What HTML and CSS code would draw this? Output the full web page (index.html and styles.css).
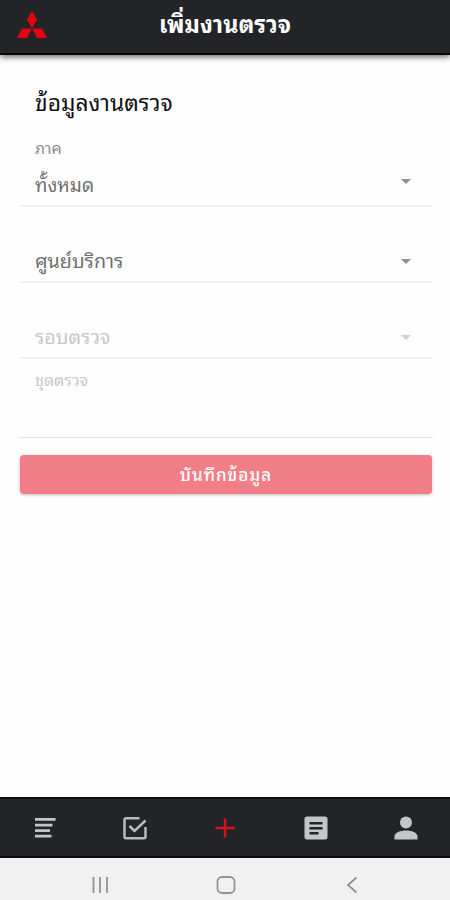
FILE: index.html
```html
<!DOCTYPE html>
<html lang="th">
<head>
    <meta charset="UTF-8">
    <meta name="viewport" content="width=device-width, initial-scale=1.0">
    <title>เพิ่มงานตรวจ</title>
    <link rel="stylesheet" href="styles.css">
</head>
<body>
    <div class="app">
        <header class="header">
            <svg class="logo" viewBox="0 0 30 27">
                <path d="M15 0l5 8.500-5 9-5-9zM15 17.500l-5 9.500H0l5-9.500zM15 17.500l5 9.500h10l-5-9.500z"/>
            </svg>
            <h1>เพิ่มงานตรวจ</h1>
        </header>

        <main class="content">
            <h2>ข้อมูลงานตรวจ</h2>
            <div class="field region">
                <label>ภาค</label>
                <div class="select"><span>ทั้งหมด</span><i class="arrow"></i></div>
            </div>
            <div class="field">
                <div class="select"><span>ศูนย์บริการ</span><i class="arrow"></i></div>
            </div>
            <div class="field disabled">
                <div class="select"><span>รอบตรวจ</span><i class="arrow"></i></div>
            </div>
            <div class="field disabled set">
                <label>ชุดตรวจ</label>
            </div>
            <button class="save" disabled>บันทึกข้อมูล</button>
        </main>

        <!-- Tab bar -->
        <nav class="tabs">
            <a class="tab">
                <svg viewBox="0 0 24 24"><path d="M2 2h20.500v2.800H2zM2 7.700h17.500v2.800H2zM2 13.200h15v2.800H2zM2 18.700h16.500v2.800H2z"/></svg>
            </a>
            <a class="tab">
                <svg class="line" viewBox="0 0 24 24"><path d="M16.500 2.200H3a1.500 1.500 0 0 0-1.500 1.500v17A1.500 1.500 0 0 0 3 22.200h18a1.500 1.500 0 0 0 1.500-1.500V11M6.500 10l5 5L22.500 4.500"/></svg>
            </a>
            <a class="tab active">
                <svg class="line" viewBox="0 0 24 24"><path d="M12 2.500v19M2.500 12h19"/></svg>
            </a>
            <a class="tab">
                <svg viewBox="0 0 24 24"><path fill-rule="evenodd" d="M3 .5h18a2.500 2.500 0 0 1 2.500 2.500v18a2.500 2.500 0 0 1-2.500 2.500H3A2.500 2.500 0 0 1 .5 21V3A2.500 2.500 0 0 1 3 .5zM5.500 6v2.400h13V6zM5.500 11v2.400h13V11zM5.500 16v2.400h9V16z"/></svg>
            </a>
            <a class="tab">
                <svg viewBox="0 0 24 24"><circle cx="12" cy="6.500" r="6"/><path d="M.5 23.500V20.500c0-4 6-6 11.500-6s11.500 2 11.500 6v3z"/></svg>
            </a>
        </nav>

        <!-- System buttons -->
        <div class="system-bar">
            <svg viewBox="0 0 20 20"><path d="M3.500 2v16M10 2v16M17 2v16"/></svg>
            <svg viewBox="0 0 20 20"><rect x="1.500" y="2" width="17" height="16" rx="4.500"/></svg>
            <svg viewBox="0 0 20 20"><path d="M14.500 2.500L6 10l8.500 7.500"/></svg>
        </div>
    </div>
</body>
</html>
```

FILE: styles.css
```css
* {
    box-sizing: border-box;
}
body {
    margin: 0;
    font-family: "Noto Sans Thai Looped", "Loma", "Noto Sans", sans-serif;
    background: #fefefe;
}
.app {
    display: flex;
    flex-direction: column;
    height: 900px;
    overflow: hidden;
}
.header {
    display: grid;
    grid-template-columns: 47px 1fr 47px;
    align-items: center;
    height: 55px;
    padding-bottom: 4px;
    background: #222427;
    border-bottom: 2px solid #08090b;
    box-shadow: 0 2px 6px rgba(0, 0, 0, 0.6);
    color: #fff;
}
.logo {
    width: 30px;
    height: 27px;
    margin-left: 17px;
    fill: #e60012;
}
h1 {
    margin: 0;
    padding-bottom: 3px;
    font-size: 23.4px;
    line-height: 36px;
    text-align: center;
}
.content {
    flex: 1;
    padding: 26px 17px 0 19px;
}
h2 {
    margin: 0 16px;
    font-size: 22.8px;
    font-weight: 400;
    line-height: 40px;
    color: #111;
}
.field {
    display: flex;
    flex-direction: column;
    justify-content: flex-end;
    height: 76px;
    padding: 0 16px 2px;
    border-bottom: 2px solid #f0f0f0;
    color: #707070;
}
.region {
    height: 86px;
}
label {
    font-size: 16px;
    line-height: 24px;
    color: #8c8c8c;
}
.select {
    display: flex;
    align-items: center;
    justify-content: space-between;
    height: 36px;
    font-size: 19.7px;
}
.select span {
    padding-bottom: 4px;
}
.region .select {
    height: 44px;
    font-size: 19px;
}
.region .select span {
    padding: 4px 0 0;
}
.arrow {
    margin-right: 6px;
    border: 5px solid transparent;
    border-top-color: #909090;
    border-bottom: 0;
}
.disabled,
.disabled label {
    color: #c8c8c8;
}
.disabled .arrow {
    border-top-color: #d0d0d0;
}
.set {
    justify-content: flex-start;
    height: 79px;
    padding-top: 8px;
    border-bottom: 1px solid #e2e2e2;
}
.save {
    display: block;
    width: 412px;
    height: 39px;
    margin: 17px 0 0 1px;
    padding: 0 0 2px;
    border: 0;
    border-radius: 4px;
    background: #f27f88;
    box-shadow: 0 1px 3px rgba(0, 0, 0, 0.25);
    color: #fff;
    font-family: inherit;
    font-size: 17px;
    font-weight: 500;
    letter-spacing: 1px;
}
.tabs {
    display: flex;
    justify-content: space-around;
    align-items: center;
    height: 61px;
    margin-right: -1px;
    background: #222427;
    border-top: 2px solid #0b0c0e;
    border-bottom: 2px solid #0b0c0e;
}
.tab svg {
    display: block;
    width: 24px;
    height: 24px;
    fill: #c4c5c6;
}
.tab .line {
    fill: none;
    stroke: #b9babb;
    stroke-width: 2.5;
}
.tab.active .line {
    stroke: #d9101d;
}
.system-bar {
    display: flex;
    justify-content: space-between;
    height: 42px;
    padding: 17px 88px 0 90px;
    background: #f1f1f1;
}
.system-bar svg {
    width: 20px;
    height: 20px;
    fill: none;
    stroke: #939393;
    stroke-width: 1.8;
}
```
